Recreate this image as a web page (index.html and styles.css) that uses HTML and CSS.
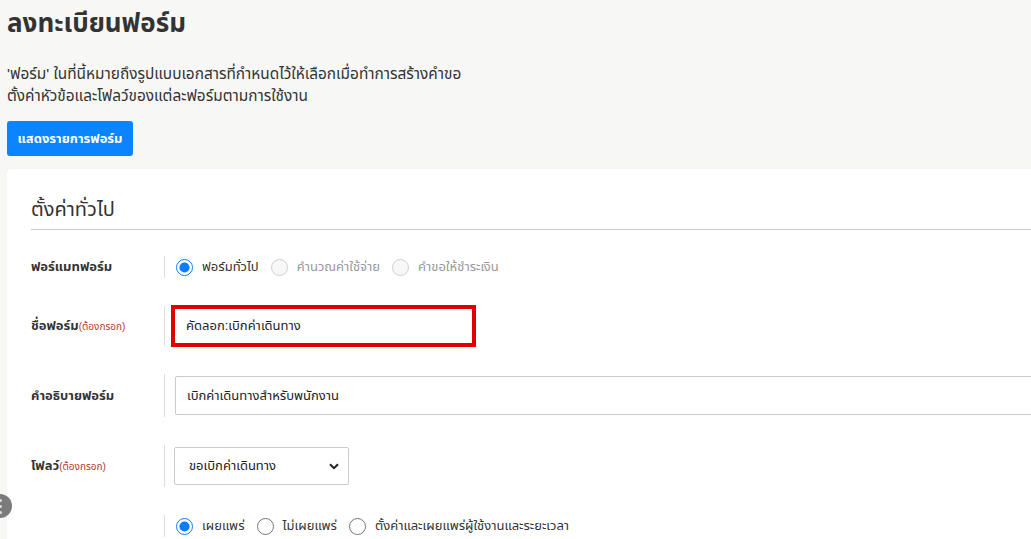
FILE: index.html
```html
<!DOCTYPE html>
<html lang="th">
<head>
<meta charset="utf-8">
<title>ลงทะเบียนฟอร์ม</title>
<link rel="stylesheet" href="styles.css">
</head>
<body>
<div class="page">
  <h1 class="title">ลงทะเบียนฟอร์ม</h1>
  <p class="desc">'ฟอร์ม' ในที่นี้หมายถึงรูปแบบเอกสารที่กำหนดไว้ให้เลือกเมื่อทำการสร้างคำขอ<br>ตั้งค่าหัวข้อและโฟลว์ของแต่ละฟอร์มตามการใช้งาน</p>
  <button class="btn-primary" type="button">แสดงรายการฟอร์ม</button>

  <section class="card">
    <h2 class="card-title">ตั้งค่าทั่วไป</h2>

    <div class="row row-radio">
      <div class="label">ฟอร์แมทฟอร์ม</div>
      <div class="control">
        <label class="radio"><input type="radio" name="fmt" checked><span>ฟอร์มทั่วไป</span></label>
        <label class="radio disabled"><input type="radio" name="fmt" disabled><span>คำนวณค่าใช้จ่าย</span></label>
        <label class="radio disabled"><input type="radio" name="fmt" disabled><span>คำขอให้ชำระเงิน</span></label>
      </div>
    </div>

    <div class="row">
      <div class="label">ชื่อฟอร์ม<span class="req">(ต้องกรอก)</span></div>
      <div class="control">
        <input class="input input-name" type="text" value="คัดลอก:เบิกค่าเดินทาง">
      </div>
    </div>

    <div class="row">
      <div class="label">คำอธิบายฟอร์ม</div>
      <div class="control">
        <input class="input input-desc" type="text" value="เบิกค่าเดินทางสำหรับพนักงาน">
      </div>
    </div>

    <div class="row">
      <div class="label">โฟลว์<span class="req">(ต้องกรอก)</span></div>
      <div class="control">
        <div class="select">
          <span>ขอเบิกค่าเดินทาง</span>
          <svg class="chev" width="10" height="7" viewBox="0 0 10 7"><path d="M1 1.2 L5 5.2 L9 1.2" fill="none" stroke="#222" stroke-width="2"/></svg>
        </div>
      </div>
    </div>

    <div class="row row-radio">
      <div class="label"></div>
      <div class="control">
        <label class="radio"><input type="radio" name="pub" checked><span>เผยแพร่</span></label>
        <label class="radio"><input type="radio" name="pub"><span>ไม่เผยแพร่</span></label>
        <label class="radio"><input type="radio" name="pub"><span>ตั้งค่าและเผยแพร่ผู้ใช้งานและระยะเวลา</span></label>
      </div>
    </div>
  </section>
</div>
<div class="float-btn"><span></span><span></span><span></span></div>
</body>
</html>
```

FILE: styles.css
```css
html, body {
  margin: 0;
  padding: 0;
  background: #f7f7f5;
  overflow: hidden;
  font-family: "Liberation Sans", "Noto Sans Thai", "Noto Sans", sans-serif;
  color: #333;
}
.page {
  padding: 0 0 0 7px;
}
.title {
  margin: 0;
  padding-top: 7px;
  font-size: 26px;
  font-weight: bold;
  line-height: 32px;
  color: #333;
}
.desc {
  margin: 24px 0 0 0;
  font-size: 15.4px;
  line-height: 22px;
  color: #333;
}
.btn-primary {
  margin-top: 14px;
  height: 35px;
  width: 126px;
  border: none;
  border-radius: 3px;
  background: #0a84ff;
  color: #fff;
  font-family: inherit;
  font-size: 13px;
  font-weight: bold;
  padding: 0;
}
.card {
  margin-top: 13px;
  background: #fff;
  border-radius: 4px 0 0 0;
  padding: 20px 0 40px 24px;
  min-height: 400px;
  box-shadow: 0 0 1px rgba(0,0,0,0.08);
}
.card-title {
  margin: 0;
  font-size: 20px;
  font-weight: normal;
  line-height: 40px;
  border-bottom: 1px solid #ccc;
  height: 40px;
}
.row {
  display: flex;
  align-items: center;
  margin-top: 28px;
}
.row:first-of-type { margin-top: 26px; }
.label {
  width: 133px;
  flex: none;
  font-size: 13px;
  font-weight: bold;
  color: #333;
}
.req {
  font-size: 10px;
  font-weight: normal;
  color: #b03a2e;
}
.control {
  flex: 1;
  display: flex;
  align-items: center;
  border-left: 1px solid #ddd;
  padding: 2px 0 2px 10px;
  min-height: 22px;
}
.row-radio .control { padding: 0 0 0 10px; }
.radio {
  display: inline-flex;
  align-items: center;
  margin-right: 11px;
  font-size: 13px;
  color: #333;
}
.radio input {
  width: 17px;
  height: 17px;
  margin: 0 9px 0 1px;
  accent-color: #0a7cff;
}
.radio.disabled { color: #999; }
.input {
  box-sizing: border-box;
  height: 38px;
  border: 1px solid #ccc;
  border-radius: 2px;
  padding: 0 11px;
  font-family: inherit;
  font-size: 13px;
  color: #222;
  background: #fff;
}
.input-name {
  width: 299px;
  height: 36px;
  margin-left: -1px;
  border-radius: 0;
  outline: 3px solid #e00000;
  border-color: #e00000;
}
.input-desc {
  width: 900px;
  height: 39px;
}
.select {
  box-sizing: border-box;
  width: 175px;
  height: 38px;
  margin-left: -1px;
  border: 1px solid #ccc;
  border-radius: 2px;
  display: flex;
  align-items: center;
  justify-content: space-between;
  padding: 0 9px 0 14px;
  font-size: 13px;
  color: #222;
}
.float-btn {
  position: fixed;
  left: -12px;
  top: 494px;
  width: 24px;
  height: 24px;
  border-radius: 50%;
  background: #7b7b7b;
  display: flex;
  flex-direction: column;
  align-items: flex-end;
  justify-content: center;
  gap: 3px;
}
.float-btn span {
  width: 3px;
  height: 3px;
  border-radius: 50%;
  background: #ddd;
  margin-right: 10px;
}
```
